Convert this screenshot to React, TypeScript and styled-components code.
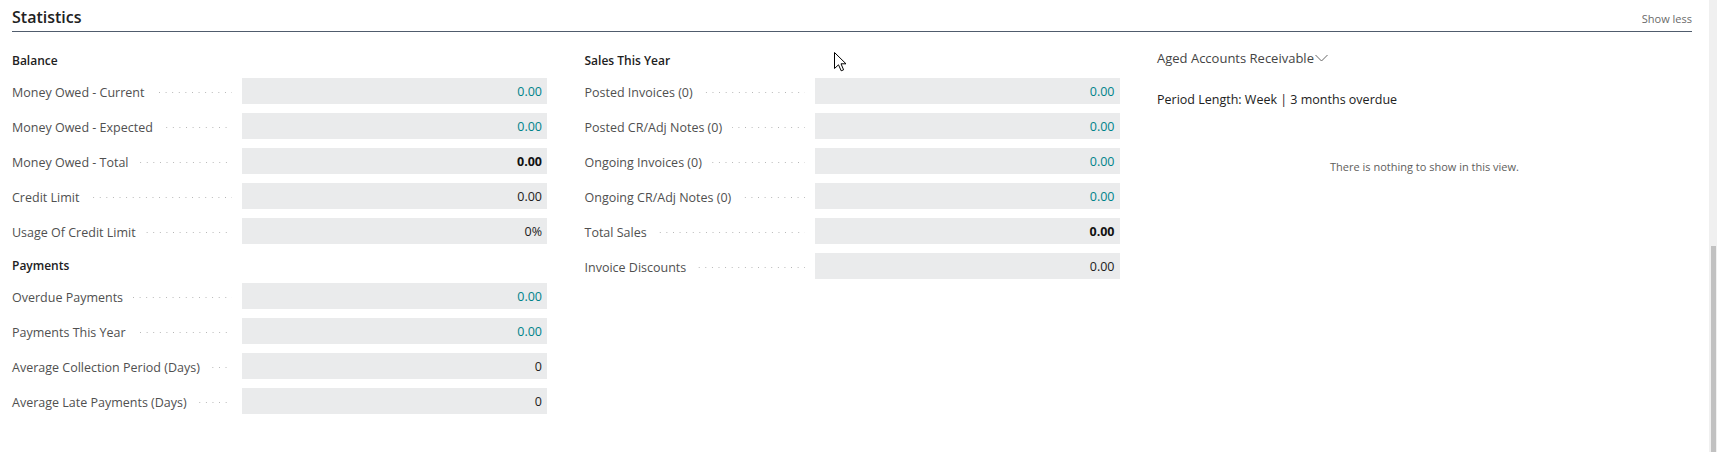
import React from "react";
import styled, { createGlobalStyle } from "styled-components";

const GlobalStyle = createGlobalStyle`
  html, body {
    margin: 0;
    padding: 0;
    background: #ffffff;
    overflow: hidden;
  }
  body {
    font-family: "Open Sans", "Noto Sans", sans-serif;
    color: #212121;
  }
`;

const Page = styled.div`
  position: relative;
  display: flex;
  width: 1717px;
  height: 452px;
  background: #ffffff;
`;

const Main = styled.main`
  flex: 1;
  min-width: 0;
  padding: 0 17px 0 12px;
`;

const Header = styled.header`
  display: flex;
  justify-content: space-between;
  align-items: baseline;
  padding: 6px 0 3px;
  border-bottom: 1px solid #505c6d;
`;

const Title = styled.h2`
  margin: 0;
  font-size: 16px;
  line-height: 22px;
  font-weight: 600;
  color: #212121;
`;

const ShowLess = styled.button`
  border: none;
  background: none;
  padding: 0;
  font-family: inherit;
  font-size: 11px;
  color: #6a6a6a;
  cursor: pointer;
`;

const Grid = styled.div`
  display: grid;
  grid-template-columns: repeat(3, 1fr);
  column-gap: 37.5px;
  padding-top: 19px;
`;

const Column = styled.section`
  display: flex;
  flex-direction: column;
  gap: 12px;
`;

const Group = styled.div`
  display: flex;
  flex-direction: column;
  gap: 9px;
`;

const GroupTitle = styled.h3`
  margin: 0 0 -2px;
  font-size: 12px;
  line-height: 20px;
  font-weight: 600;
  color: #212121;
`;

const Row = styled.div`
  display: grid;
  grid-template-columns: 230px 1fr;
  height: 26px;
  align-items: center;
`;

const LabelCell = styled.div`
  display: flex;
  align-items: center;
  height: 100%;
  padding-top: 2px;
  box-sizing: border-box;
  margin-right: 10px;
  min-width: 0;
`;

const Label = styled.span`
  font-size: 12.5px;
  color: #505050;
  white-space: nowrap;
`;

const Dots = styled.span`
  flex: 1;
  height: 1px;
  margin: 1px 0 0 10px;
  background-image: linear-gradient(to right, #b5b5b5 0 1px, transparent 1px 100%);
  background-size: 6.6px 1px;
  background-repeat: repeat-x;
  background-position: right center;
`;

type Tone = "link" | "plain" | "bold";

const ValueBox = styled.div<{ $tone: Tone }>`
  height: 26px;
  box-sizing: border-box;
  padding: 2px 5px 0 0;
  line-height: 24px;
  background: #eaebec;
  text-align: right;
  font-size: 12.5px;
  font-weight: ${(p) => (p.$tone === "bold" ? 700 : 400)};
  color: ${(p) =>
    p.$tone === "link" ? "#00838a" : p.$tone === "bold" ? "#111111" : "#212121"};
`;

const AgedTitle = styled.button`
  display: flex;
  align-items: center;
  gap: 1px;
  margin-top: -3px;
  padding: 0;
  height: 20px;
  border: none;
  background: none;
  font-family: inherit;
  font-size: 13px;
  color: #444444;
  cursor: pointer;
  align-self: flex-start;
`;

const PeriodText = styled.div`
  margin-top: 10px;
  font-size: 12.5px;
  line-height: 20px;
  color: #212121;
`;

const EmptyText = styled.div`
  margin-top: 35px;
  text-align: center;
  font-size: 11px;
  line-height: 20px;
  color: #605e5c;
`;

const AgedColumn = styled.section`
  display: flex;
  flex-direction: column;
  gap: 12px;
`;

const ScrollTrack = styled.div`
  width: 8px;
  height: 452px;
  background: #f0f0f0;
  padding-top: 246px;
  box-sizing: border-box;
  display: flex;
  justify-content: center;
`;

const ScrollThumb = styled.div`
  width: 5px;
  height: 206px;
  margin-left: 1px;
  background: #c1c1c1;
`;

const Cursor = styled.svg`
  position: absolute;
  left: 834px;
  top: 52px;
  pointer-events: none;
`;

type Field = { label: string; value: string; tone: Tone };

const balance: Field[] = [
  { label: "Money Owed - Current", value: "0.00", tone: "link" },
  { label: "Money Owed - Expected", value: "0.00", tone: "link" },
  { label: "Money Owed - Total", value: "0.00", tone: "bold" },
  { label: "Credit Limit", value: "0.00", tone: "plain" },
  { label: "Usage Of Credit Limit", value: "0%", tone: "plain" },
];

const payments: Field[] = [
  { label: "Overdue Payments", value: "0.00", tone: "link" },
  { label: "Payments This Year", value: "0.00", tone: "link" },
  { label: "Average Collection Period (Days)", value: "0", tone: "plain" },
  { label: "Average Late Payments (Days)", value: "0", tone: "plain" },
];

const sales: Field[] = [
  { label: "Posted Invoices (0)", value: "0.00", tone: "link" },
  { label: "Posted CR/Adj Notes (0)", value: "0.00", tone: "link" },
  { label: "Ongoing Invoices (0)", value: "0.00", tone: "link" },
  { label: "Ongoing CR/Adj Notes (0)", value: "0.00", tone: "link" },
  { label: "Total Sales", value: "0.00", tone: "bold" },
  { label: "Invoice Discounts", value: "0.00", tone: "plain" },
];

function FieldGroup({ title, fields }: { title: string; fields: Field[] }) {
  return (
    <Group>
      <GroupTitle>{title}</GroupTitle>
      {fields.map((f) => (
        <Row key={f.label}>
          <LabelCell>
            <Label>{f.label}</Label>
            <Dots />
          </LabelCell>
          <ValueBox $tone={f.tone}>{f.value}</ValueBox>
        </Row>
      ))}
    </Group>
  );
}

function Chevron() {
  return (
    <svg width="13" height="8" viewBox="0 0 13 8" fill="none">
      <path d="M0.5 1 L6.5 7 L12.5 1" stroke="#666666" strokeWidth="1" />
    </svg>
  );
}

export default function App() {
  return (
    <>
      <GlobalStyle />
      <Page>
        <Main>
          <Header>
            <Title>Statistics</Title>
            <ShowLess>Show less</ShowLess>
          </Header>
          <Grid>
            <Column>
              <FieldGroup title="Balance" fields={balance} />
              <FieldGroup title="Payments" fields={payments} />
            </Column>
            <Column>
              <FieldGroup title="Sales This Year" fields={sales} />
            </Column>
            <AgedColumn>
              <AgedTitle>
                Aged Accounts Receivable
                <Chevron />
              </AgedTitle>
              <PeriodText>Period Length: Week | 3 months overdue</PeriodText>
              <EmptyText>There is nothing to show in this view.</EmptyText>
            </AgedColumn>
          </Grid>
        </Main>
        <ScrollTrack>
          <ScrollThumb />
        </ScrollTrack>
        <Cursor width="13" height="20" viewBox="0 0 13 20">
          <path
            d="M0.5 0.5 L0.5 16.5 L4.5 12.8 L7.2 18.8 L9.6 17.8 L7 11.8 L12 11.8 Z"
            fill="#ffffff"
            stroke="#000000"
            strokeWidth="1"
            strokeLinejoin="miter"
          />
        </Cursor>
      </Page>
    </>
  );
}
